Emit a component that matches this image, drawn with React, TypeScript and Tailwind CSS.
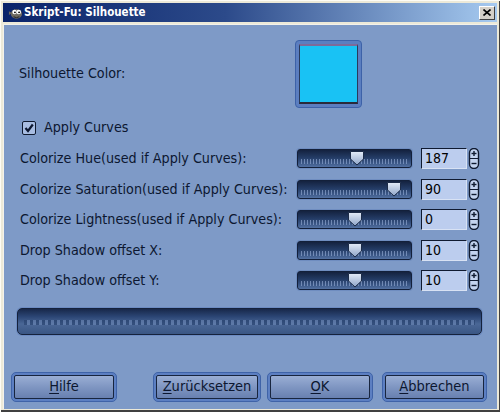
import React from "react";

const font = { fontFamily: '"DejaVu Sans Condensed", "DejaVu Sans", sans-serif' };

function Thumb() {
  return (
    <svg width="16" height="15" viewBox="0 0 16 15" className="block">
      <defs>
        <linearGradient id="tg" x1="0" y1="0" x2="0" y2="1">
          <stop offset="0" stopColor="#e4ecf8" />
          <stop offset="1" stopColor="#8ea4c8" />
        </linearGradient>
      </defs>
      <path d="M1.5 0.5 H14.5 V8 L8 14 L1.5 8 Z" fill="url(#tg)" stroke="#1d2c48" strokeWidth="1" />
    </svg>
  );
}

function Slider({ pos }: { pos: number }) {
  return (
    <div className="relative w-[115px] h-[19px] rounded-[3px] border border-[#13203a] bg-[linear-gradient(180deg,#14223f_0%,#243c66_45%,#3a5685_75%,#5371a2_100%)] shadow-[0_0_0_1px_#6f8dc0]">
      <div className="absolute left-[3px] right-[3px] bottom-[3px] h-[5px] bg-[repeating-linear-gradient(90deg,#8aa2cc_0px,#8aa2cc_1px,transparent_1px,transparent_3px)] opacity-70" />
      <div className="absolute top-[1px]" style={{ left: pos - 8 }}>
        <Thumb />
      </div>
    </div>
  );
}

function Spin() {
  return (
    <svg width="12" height="21" viewBox="0 0 12 21" className="block">
      <rect x="1.5" y="0.5" width="9" height="20" rx="4.5" fill="#c3d3ef" stroke="#0f1a30" strokeWidth="1.4" />
      <line x1="1.5" y1="10.5" x2="10.5" y2="10.5" stroke="#0f1a30" strokeWidth="1" />
      <line x1="6" y1="3" x2="6" y2="8" stroke="#0f1a30" strokeWidth="1.4" />
      <line x1="3.5" y1="5.5" x2="8.5" y2="5.5" stroke="#0f1a30" strokeWidth="1.4" />
      <line x1="3.5" y1="15.5" x2="8.5" y2="15.5" stroke="#0f1a30" strokeWidth="1.4" />
    </svg>
  );
}

function Row({ label, pos, value }: { label: string; pos: number; value: string }) {
  return (
    <div className="flex items-center h-[30.5px]">
      <div className="w-[293px] pl-[16px] text-[14.2px] text-[#0c1730] whitespace-nowrap">{label}</div>
      <Slider pos={pos} />
      <div className="ml-[9px] w-[46px] h-[21px] border border-[#0f1a30] border-r-[#d8e2f4] border-b-[#d8e2f4] bg-[#bccdee] text-[14px] text-black pl-[3px] leading-[19px]">
        {value}
      </div>
      <div className="ml-[1px]">
        <Spin />
      </div>
    </div>
  );
}

function Btn({ u, rest, w, ml }: { u: string; rest: string; w: string; ml: string }) {
  return (
    <div className={`${w} ${ml} h-[30px] rounded-[5px] bg-[#5c7fc2] border border-[#3f63a8] p-[2px]`}>
      <div className="h-full w-full rounded-[2px] border border-[#18253e] bg-[linear-gradient(180deg,#9aaed4_0%,#7f96c2_50%,#6880b0_100%)] flex items-center justify-center text-[14.5px] text-[#0c1730]">
        <span>
          <span className="underline underline-offset-2">{u}</span>
          {rest}
        </span>
      </div>
    </div>
  );
}

export default function App() {
  return (
    <div className="w-[500px] h-[412px] bg-[#ece9d8] border-l-[1px] border-t-[1px] border-[#fdfcf5] flex flex-col overflow-hidden" style={font}>
      <div className="flex flex-col flex-1 border-r-[1px] border-b-[2px] border-[#404040] p-[2px] pb-[1px]">
        <div className="h-[19px] flex items-center bg-[linear-gradient(90deg,#0a246a_0%,#2c4a8a_45%,#a6caf0_100%)] pl-[5px] pr-[2px]">
          <svg width="15" height="14" viewBox="0 0 16 14" className="block">
            <ellipse cx="9" cy="8" rx="6" ry="5" fill="#6e6a60" />
            <circle cx="7" cy="6" r="2.4" fill="#fff" />
            <circle cx="11.5" cy="6" r="2.4" fill="#fff" />
            <circle cx="7.4" cy="6.3" r="1" fill="#000" />
            <circle cx="11.8" cy="6.3" r="1" fill="#000" />
            <path d="M1 5 L4 7 L1 9 Z" fill="#6e6a60" />
            <path d="M6 11 Q9 13 12 11" stroke="#222" fill="none" strokeWidth="1" />
          </svg>
          <span className="ml-[1px] text-[11.5px] font-bold text-white">
            Skript-Fu: Silhouette
          </span>
          <div className="ml-auto w-[16px] h-[14px] bg-[#d4d0c8] border border-t-white border-l-white border-r-[#404040] border-b-[#404040] flex items-center justify-center">
            <svg width="8" height="7" viewBox="0 0 8 7">
              <path d="M0.5 0.5 L7.5 6.5 M7.5 0.5 L0.5 6.5" stroke="#000" strokeWidth="1.6" />
            </svg>
          </div>
        </div>
        <div className="flex-1 mt-[2px] bg-[#7e9ac7] border-l border-t border-[#f4f2ea] flex flex-col">
          <div className="flex items-center mt-[15px] h-[68px]">
            <div className="w-[291px] pl-[15px] text-[14.2px] text-[#0c1730]">Silhouette Color:</div>
            <div className="w-[67px] h-[68px] rounded-[4px] bg-[#5b7ec0] border border-[#3d62a8] p-[3px]">
              <div className="w-full h-full border-t-[2px] border-b-[2px] border-t-[#7d6a9a] border-b-[#2a2a3a] border-x border-x-[#2a3a5a] bg-[#19c2f4]" />
            </div>
          </div>
          <div className="flex items-center h-[20px] mt-[10px] pl-[18px]">
            <div className="w-[14px] h-[14px] rounded-[2px] border border-[#0f1a30] bg-[#a8bde2] flex items-center justify-center">
              <svg width="10" height="10" viewBox="0 0 10 10">
                <path d="M1.5 5 L4 8 L8.8 1.5" stroke="#0c1730" strokeWidth="2.2" fill="none" />
              </svg>
            </div>
            <span className="ml-[8px] text-[14.2px] text-[#0c1730]">Apply Curves</span>
          </div>
          <div className="mt-[5.5px] flex flex-col">
            <Row label="Colorize Hue(used if Apply Curves):" pos={59} value="187" />
            <Row label="Colorize Saturation(used if Apply Curves):" pos={96} value="90" />
            <Row label="Colorize Lightness(used if Apply Curves):" pos={57} value="0" />
            <Row label="Drop Shadow offset X:" pos={57} value="10" />
            <Row label="Drop Shadow offset Y:" pos={57} value="10" />
          </div>
          <div className="ml-[13px] mt-[12px] w-[465px] h-[27px] rounded-[5px] border border-[#15223c] bg-[linear-gradient(180deg,#18284a_0%,#2b4574_30%,#4a6796_60%,#3a5684_100%)] shadow-[0_0_0_1px_#6c8bc2] relative overflow-hidden">
            <div className="absolute left-[6px] right-[6px] top-[11px] h-[5px] bg-[repeating-linear-gradient(90deg,#26406c_0px,#26406c_3px,#6b86b4_3px,#6b86b4_6px)] opacity-60" />
          </div>
          <div className="flex mt-[37px]">
            <Btn u="H" rest="ilfe" w="w-[106px]" ml="ml-[7px]" />
            <Btn u="Z" rest="urücksetzen" w="w-[108px]" ml="ml-[36px]" />
            <Btn u="O" rest="K" w="w-[106px]" ml="ml-[6px]" />
            <Btn u="A" rest="bbrechen" w="w-[105px]" ml="ml-[9px]" />
          </div>
        </div>
      </div>
    </div>
  );
}
